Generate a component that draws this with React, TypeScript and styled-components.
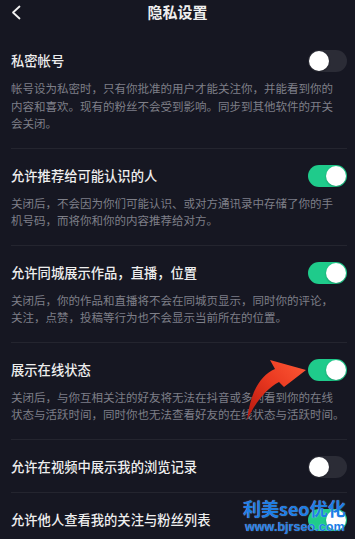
import React from "react";
import styled, { createGlobalStyle } from "styled-components";

const GlobalStyle = createGlobalStyle`
  html, body { margin: 0; padding: 0; background: #161722; }
  * { box-sizing: border-box; }
  body { font-family: "Noto Sans CJK SC", "Noto Sans", sans-serif; }
`;

const Page = styled.div`
  position: relative;
  width: 355px;
  height: 539px;
  overflow: hidden;
  background: #161722;
  color: #ececec;
`;

const Header = styled.header`
  display: grid;
  grid-template-columns: 40px 1fr 40px;
  align-items: center;
  height: 24px;
  margin-bottom: 9px;
`;

const BackButton = styled.button`
  display: flex;
  align-items: center;
  justify-content: flex-start;
  padding: 0 0 0 11px;
  height: 24px;
  border: 0;
  background: transparent;
  color: #f2f2f2;
`;

const Title = styled.h1`
  margin: 0;
  text-align: center;
  font-size: 15px;
  line-height: 24px;
  font-weight: 700;
  color: #efefef;
`;

const List = styled.div`
  display: flex;
  flex-direction: column;
  padding: 0 8px 0 11px;
`;

const Row = styled.section<{ $first?: boolean }>`
  display: grid;
  grid-template-columns: 1fr auto;
  align-items: center;
  padding: 17px 0 15px;
  border-top: 1px solid ${(p) => (p.$first ? "transparent" : "#24252f")};
`;

const RowTitle = styled.div`
  font-size: 13.3px;
  line-height: 20px;
  height: 20px;
  font-weight: 500;
  color: #eeeeee;
  white-space: nowrap;
`;

const Desc = styled.p`
  grid-column: 1 / -1;
  margin: 9px 0 0;
  font-size: 11.5px;
  line-height: 17.5px;
  color: #7e7f88;
  white-space: nowrap;
`;

const Track = styled.div<{ $on: boolean }>`
  position: relative;
  width: 39px;
  height: 22px;
  margin: -1px 0;
  border-radius: 11px;
  background: ${(p) => (p.$on ? "#1fcb8b" : "#2b2c36")};
`;

const Knob = styled.span<{ $on: boolean }>`
  position: absolute;
  top: 1px;
  left: ${(p) => (p.$on ? "18px" : "1px")};
  width: 20px;
  height: 20px;
  border-radius: 50%;
  background: #ffffff;
  box-shadow: 0 1px 2px rgba(0, 0, 0, 0.25);
`;

const Arrow = styled.svg`
  position: absolute;
  left: 244px;
  top: 358px;
  width: 66px;
  height: 66px;
  pointer-events: none;
`;

const Watermark = styled.div`
  position: absolute;
  left: 243px;
  top: 497px;
  display: flex;
  flex-direction: column;
  align-items: flex-start;
  pointer-events: none;
  color: #1c7ee6;
  font-weight: 700;
  text-shadow: 0 0 1px rgba(255, 255, 255, 0.6);
`;

const WmMain = styled.div`
  font-family: "Noto Sans CJK SC", "Noto Sans", sans-serif;
  font-size: 18px;
  line-height: 22px;
`;

const WmUrl = styled.div`
  font-family: "Liberation Sans", Arial, sans-serif;
  font-size: 12.6px;
  line-height: 16px;
  padding-left: 2px;
`;

type Item = { title: string; on: boolean; lines?: string[] };

const items: Item[] = [
  {
    title: "私密帐号",
    on: false,
    lines: [
      "帐号设为私密时，只有你批准的用户才能关注你，并能看到你的",
      "内容和喜欢。现有的粉丝不会受到影响。同步到其他软件的开关",
      "会关闭。",
    ],
  },
  {
    title: "允许推荐给可能认识的人",
    on: true,
    lines: [
      "关闭后，不会因为你们可能认识、或对方通讯录中存储了你的手",
      "机号码，而将你和你的内容推荐给对方。",
    ],
  },
  {
    title: "允许同城展示作品，直播，位置",
    on: true,
    lines: [
      "关闭后，你的作品和直播将不会在同城页显示，同时你的评论，",
      "关注，点赞，投稿等行为也不会显示当前所在的位置。",
    ],
  },
  {
    title: "展示在线状态",
    on: true,
    lines: [
      "关闭后，与你互相关注的好友将无法在抖音或多闪看到你的在线",
      "状态与活跃时间，同时你也无法查看好友的在线状态与活跃时间。",
    ],
  },
  { title: "允许在视频中展示我的浏览记录", on: false },
  { title: "允许他人查看我的关注与粉丝列表", on: true },
];

function Switch({ on }: { on: boolean }) {
  return (
    <Track $on={on}>
      <Knob $on={on} />
    </Track>
  );
}

export default function App() {
  return (
    <>
      <GlobalStyle />
      <Page>
        <Header>
          <BackButton aria-label="返回">
            <svg width="10" height="15" viewBox="0 0 10 15" fill="none">
              <path d="M8.5 1.5 L2 7.5 L8.5 13.5" stroke="#f2f2f2" strokeWidth="1.8" strokeLinecap="round" strokeLinejoin="round" />
            </svg>
          </BackButton>
          <Title>隐私设置</Title>
          <span />
        </Header>
        <List>
          {items.map((it, i) => (
            <Row key={it.title} $first={i === 0}>
              <RowTitle>{it.title}</RowTitle>
              <Switch on={it.on} />
              {it.lines && (
                <Desc>
                  {it.lines.map((l, j) => (
                    <React.Fragment key={j}>
                      {j > 0 && <br />}
                      {l}
                    </React.Fragment>
                  ))}
                </Desc>
              )}
            </Row>
          ))}
        </List>
        <Arrow viewBox="0 0 66 66">
          <defs>
            <linearGradient id="arrowGrad" x1="0" y1="1" x2="1" y2="0">
              <stop offset="0" stopColor="#b3170e" />
              <stop offset="0.5" stopColor="#e8371f" />
              <stop offset="1" stopColor="#ff5a36" />
            </linearGradient>
          </defs>
          <path
            d="M62 12 L26 2 L31 11 C17 17 7 32 3 62 C11 45 22 31 35 24 L40 29 Z"
            fill="url(#arrowGrad)"
          />
        </Arrow>
        <Watermark>
          <WmMain>利美seo优化</WmMain>
          <WmUrl>www.bjrseo.com</WmUrl>
        </Watermark>
      </Page>
    </>
  );
}
